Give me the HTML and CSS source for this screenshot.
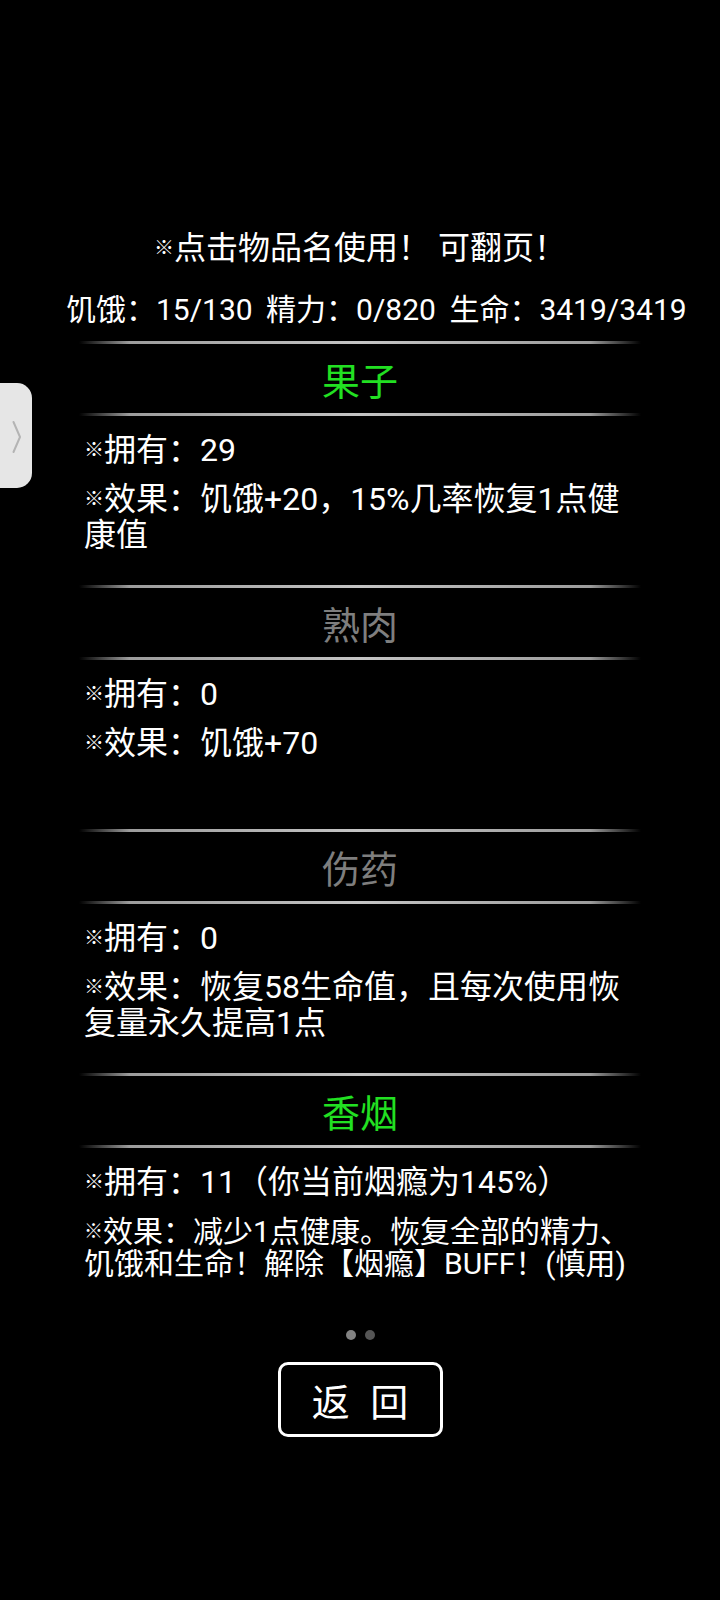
FILE: index.html
```html
<!DOCTYPE html>
<html lang="zh-CN">
<head>
<meta charset="utf-8">
<title>物品</title>
<link rel="stylesheet" href="styles.css">
</head>
<body>
<div class="page">
  <div class="title"><span class="mark">※</span>点击物品名使用！ 可翻页！</div>
  <div class="stats">饥饿：15/130 精力：0/820 生命：3419/3419</div>

  <div class="list">
    <div class="item">
      <div class="divider"></div>
      <div class="name green">果子</div>
      <div class="divider"></div>
      <div class="body">
        <div class="line"><span class="mark">※</span>拥有：29</div>
        <div class="effect"><span class="mark">※</span>效果：饥饿+20，15%几率恢复1点健<br>康值</div>
      </div>
    </div>

    <div class="item">
      <div class="divider"></div>
      <div class="name gray">熟肉</div>
      <div class="divider"></div>
      <div class="body">
        <div class="line"><span class="mark">※</span>拥有：0</div>
        <div class="effect"><span class="mark">※</span>效果：饥饿+70</div>
      </div>
    </div>

    <div class="item">
      <div class="divider"></div>
      <div class="name gray">伤药</div>
      <div class="divider"></div>
      <div class="body">
        <div class="line"><span class="mark">※</span>拥有：0</div>
        <div class="effect"><span class="mark">※</span>效果：恢复58生命值，且每次使用恢<br>复量永久提高1点</div>
      </div>
    </div>

    <div class="item">
      <div class="divider"></div>
      <div class="name green">香烟</div>
      <div class="divider"></div>
      <div class="body">
        <div class="line"><span class="mark">※</span>拥有：11（你当前烟瘾为145%）</div>
        <div class="effect small"><span class="mark">※</span>效果：减少1点健康。恢复全部的精力、<br>饥饿和生命！解除【烟瘾】BUFF！(慎用)</div>
      </div>
    </div>
  </div>

  <div class="dots">
    <span class="dot active"></span>
    <span class="dot"></span>
  </div>

  <div class="actions">
    <div class="button">返 回</div>
  </div>

  <div class="handle">
    <svg width="32" height="105" viewBox="0 0 32 105">
      <polyline points="13.5,39 20,54 13.5,69" fill="none" stroke="#b4b4b4" stroke-width="2" stroke-linecap="round" stroke-linejoin="round"/>
    </svg>
  </div>
</div>
</body>
</html>
```

FILE: styles.css
```css
* {
  box-sizing: border-box;
}

html, body {
  margin: 0;
  padding: 0;
  background: #000;
}

body {
  width: 720px;
  height: 1600px;
  overflow: hidden;
  color: #fff;
  font-family: Roboto, "Noto Sans CJK SC", sans-serif;
}

.page {
  position: relative;
  width: 720px;
  height: 1600px;
  padding-top: 228px;
}

.mark {
  font-family: "Noto Sans CJK SC", sans-serif;
  font-size: 20px;
  font-weight: 700;
  vertical-align: 4px;
  line-height: 1;
}

.title {
  font-size: 32px;
  line-height: 40px;
  height: 40px;
  text-align: center;
}

.stats {
  margin-top: 22px;
  font-size: 30px;
  line-height: 40px;
  height: 40px;
  padding-left: 66px;
  word-spacing: 6px;
  white-space: nowrap;
}

.list {
  margin-top: 11px;
  display: flex;
  flex-direction: column;
}

.item {
  display: flex;
  flex-direction: column;
}

.divider {
  height: 3px;
  margin: 0 79px;
  background: linear-gradient(to right,
    rgba(150, 150, 150, 0) 0%,
    #9c9c9c 9%,
    #c4c4c4 50%,
    #9c9c9c 91%,
    rgba(150, 150, 150, 0) 100%);
}

.name {
  height: 69px;
  line-height: 69px;
  font-size: 38px;
  text-align: center;
  font-family: "Noto Sans CJK SC", sans-serif;
}

.green {
  color: #22e022;
}

.gray {
  color: #7e7e7e;
}

.body {
  height: 169px;
  padding: 16px 0 0 84px;
  font-size: 32px;
}

.line {
  line-height: 36px;
  white-space: nowrap;
}

.effect {
  margin-top: 13px;
  line-height: 36px;
  white-space: nowrap;
}

.effect.small {
  font-size: 30px;
  line-height: 32px;
  margin-top: 16px;
}

.effect.small .mark {
  font-size: 19px;
}

.dots {
  margin-top: 13px;
  display: flex;
  justify-content: center;
  gap: 9px;
}

.dot {
  width: 10px;
  height: 10px;
  border-radius: 50%;
  background: #555;
}

.dot.active {
  background: #828282;
}

.actions {
  margin-top: 22px;
  display: flex;
  justify-content: center;
}

.button {
  width: 165px;
  height: 75px;
  border: 3px solid #fff;
  border-radius: 10px;
  display: flex;
  align-items: center;
  justify-content: center;
  font-family: "Noto Sans CJK SC", sans-serif;
  font-size: 38px;
  word-spacing: 12px;
  color: #fff;
}

.handle {
  position: absolute;
  left: 0;
  top: 383px;
  width: 32px;
  height: 105px;
  background: #e6e6e6;
  border-radius: 0 15px 15px 0;
}

.handle svg {
  display: block;
}
```
